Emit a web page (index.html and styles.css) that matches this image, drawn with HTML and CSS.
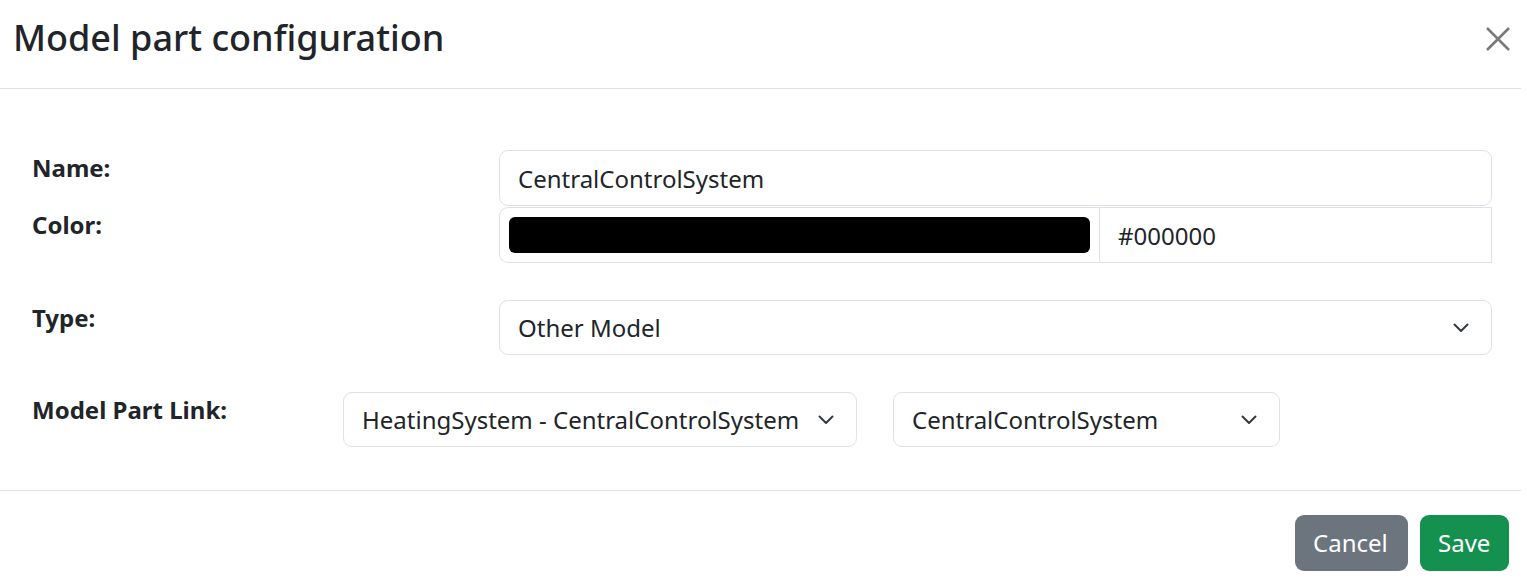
FILE: index.html
```html
<!DOCTYPE html>
<html>
	<head>
		<meta charset="UTF-8">
		<title>Model part configuration</title>
		<link rel="stylesheet" href="styles.css">
	</head>
	<body>
		<div class="modal">
			<div class="modal-header">
				<h5 class="modal-title">Model part configuration</h5>
				<a href="javascript:;" class="btn-close">
					<svg width="24" height="24" viewBox="0 0 24 24"><path d="M1 1L23 23M23 1L1 23" stroke="#7a7a7a" stroke-width="2.6" fill="none"/></svg>
				</a>
			</div>
			<div class="modal-body">
				<div class="group">
					<div class="labels">
						<label class="lbl">Name:</label>
						<label class="lbl lbl-color">Color:</label>
					</div>
					<div class="inputs">
						<input class="form-control" type="text" value="CentralControlSystem">
						<div class="color-group">
							<div class="swatch-box"><div class="swatch"></div></div>
							<input class="hex" type="text" value="#000000">
						</div>
					</div>
				</div>
				<div class="row row-type">
					<label class="lbl">Type:</label>
					<div class="select select-full">
						<span>Other Model</span>
						<svg width="16" height="10" viewBox="0 0 16 10"><path d="M1.5 1.5l6.5 6.5 6.5-6.5" stroke="#343a40" stroke-width="2" fill="none" stroke-linecap="round" stroke-linejoin="round"/></svg>
					</div>
				</div>
				<div class="row row-link">
					<label class="lbl lbl-link">Model Part Link:</label>
					<div class="select select-model">
						<span>HeatingSystem - CentralControlSystem</span>
						<svg width="16" height="10" viewBox="0 0 16 10"><path d="M1.5 1.5l6.5 6.5 6.5-6.5" stroke="#343a40" stroke-width="2" fill="none" stroke-linecap="round" stroke-linejoin="round"/></svg>
					</div>
					<div class="select select-part">
						<span>CentralControlSystem</span>
						<svg width="16" height="10" viewBox="0 0 16 10"><path d="M1.5 1.5l6.5 6.5 6.5-6.5" stroke="#343a40" stroke-width="2" fill="none" stroke-linecap="round" stroke-linejoin="round"/></svg>
					</div>
				</div>
			</div>
			<div class="modal-footer">
				<a href="javascript:;" class="btn btn-cancel">Cancel</a>
				<a href="javascript:;" class="btn btn-save">Save</a>
			</div>
		</div>
	</body>
</html>
```

FILE: styles.css
```css
body,h5{
	margin: 0;
	padding: 0;
}
body{
	font-family: "Noto Sans", "Open Sans", sans-serif;
	color: #212529;
	background: white;
}
a{
	text-decoration: none;
}
.modal{
	width: 1521px;
}
.modal-header{
	height: 89px;
	box-sizing: border-box;
	border-bottom: 1px solid #dee2e6;
	padding: 16px 11px 0 13px;
	display: flex;
	justify-content: space-between;
	align-items: flex-start;
}
.modal-title{
	font-size: 36px;
	font-weight: 500;
	line-height: 43px;
}
.btn-close{
	display: block;
	width: 24px;
	height: 24px;
	margin-top: 11px;
}
.btn-close svg{
	display: block;
}
.modal-body{
	padding: 61px 29px 43px 32px;
}
.lbl{
	display: block;
	font-size: 24px;
	font-weight: 700;
	line-height: 36px;
}
.group{
	display: flex;
}
.labels{
	width: 467px;
	flex: none;
}
.lbl-color{
	margin-top: 21px;
}
.inputs{
	flex: 1;
}
.form-control,
.hex{
	font-family: inherit;
	font-size: 24px;
	line-height: 36px;
	color: #212529;
	border: 1px solid #dee2e6;
	outline: none;
	box-sizing: border-box;
	height: 56px;
	padding: 9px 18px;
	display: block;
	width: 100%;
}
.form-control{
	border-radius: 9px;
}
.color-group{
	display: flex;
	margin-top: 1px;
}
.swatch-box{
	width: 601px;
	height: 56px;
	box-sizing: border-box;
	border: 1px solid #dee2e6;
	border-radius: 9px 0 0 9px;
	padding: 9px;
	flex: none;
}
.swatch{
	width: 581px;
	height: 36px;
	background: #000;
	border-radius: 6px;
}
.hex{
	border-left: none;
	flex: 1;
}
.row{
	display: flex;
	margin-top: 37px;
}
.row-type .lbl{
	width: 467px;
	flex: none;
}
.lbl-link{
	width: 311px;
	flex: none;
}
.select{
	height: 55px;
	box-sizing: border-box;
	border: 1px solid #dee2e6;
	border-radius: 9px;
	padding: 0 22px 0 18px;
	display: flex;
	align-items: center;
	justify-content: space-between;
	font-size: 24px;
	line-height: 36px;
}
.select svg{
	flex: none;
	margin-top: 1px;
}
.select-full{
	flex: 1;
}
.select-model{
	width: 514px;
}
.select-part{
	width: 387px;
	margin-left: 36px;
}
.modal-footer{
	border-top: 1px solid #dee2e6;
	padding: 24px 12px 13px 0;
	display: flex;
	justify-content: flex-end;
	gap: 12px;
}
.btn{
	display: block;
	height: 56px;
	box-sizing: border-box;
	padding: 9px 18px;
	font-size: 24px;
	line-height: 38px;
	color: white;
	border-radius: 9px;
}
.btn-cancel{
	background: #6c757d;
	width: 113px;
}
.btn-save{
	background: #14904f;
	width: 89px;
}
```
